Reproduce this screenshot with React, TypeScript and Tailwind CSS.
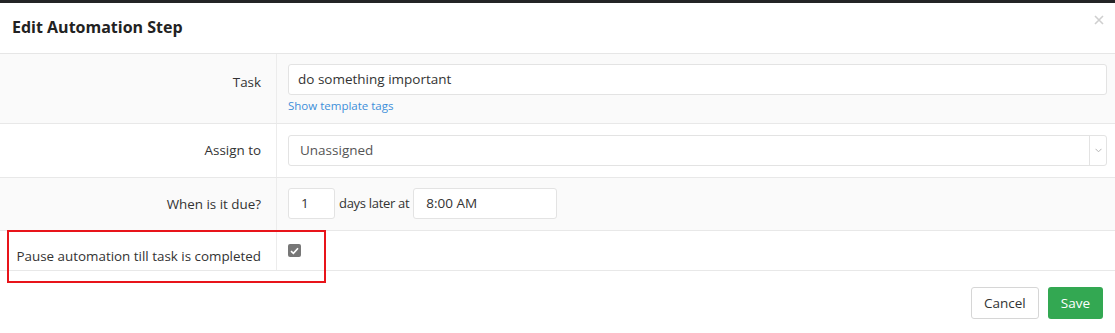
import React from 'react';

function Row({
  label,
  gray,
  children,
  labelClass = 'items-center',
  className = '',
}: {
  label: string;
  gray?: boolean;
  children: React.ReactNode;
  labelClass?: string;
  className?: string;
}) {
  return (
    <div className={`flex border-b border-[#e8e8e8] ${gray ? 'bg-[#fafafa]' : 'bg-white'} ${className}`}>
      <div className={`w-[277px] shrink-0 flex justify-end pr-[15px] border-r border-[#ececec] ${labelClass}`}>
        <span className="text-[13.4px] text-[#333]">{label}</span>
      </div>
      <div className="flex-1 pl-[11px] pr-[8px]">{children}</div>
    </div>
  );
}

export default function App() {
  return (
    <div className="w-[1115px] h-[333px] bg-white overflow-hidden font-['Open_Sans',sans-serif] text-[#333]">
      <div className="h-[3px] bg-[#232426]" />

      {/* Header */}
      <div className="h-[51px] flex items-center justify-between pl-[12px] pr-[11px] border-b border-[#e6e6e6]">
        <h1 className="text-[16px] font-bold text-[#222] -mt-[3px]">Edit Automation Step</h1>
        <svg width="10" height="10" viewBox="0 0 10 10" className="-mt-[16px]">
          <path d="M1 1 L9 9 M9 1 L1 9" stroke="#cfcfcf" strokeWidth="1.6" />
        </svg>
      </div>

      {/* Task */}
      <Row label="Task" gray labelClass="items-start pt-[18px]">
        <div className="pt-[10px] pb-[9px]">
          <div className="h-[31px] bg-white border border-[#e3e3e3] rounded-[3px] flex items-center px-[9px] text-[13.5px] text-[#333]">
            do something important
          </div>
          <div className="mt-[3px] text-[11.5px] text-[#3d8fd9] leading-[16px]">Show template tags</div>
        </div>
      </Row>

      {/* Assign to */}
      <Row label="Assign to">
        <div className="pt-[11px] pb-[11px]">
          <div className="h-[31px] bg-white border border-[#e3e3e3] rounded-[3px] flex items-center text-[13.5px] text-[#555]">
            <span className="flex-1 px-[11px]">Unassigned</span>
            <div className="w-[17px] h-full border-l border-[#e3e3e3] flex items-center justify-center">
              <svg width="7" height="5" viewBox="0 0 7 5">
                <path d="M0.5 0.8 L3.5 3.8 L6.5 0.8" fill="none" stroke="#b5b5b5" strokeWidth="1" />
              </svg>
            </div>
          </div>
        </div>
      </Row>

      {/* When is it due */}
      <Row label="When is it due?" gray>
        <div className="pt-[10px] pb-[11px] flex items-center">
          <div className="w-[47px] h-[31px] bg-white border border-[#e3e3e3] rounded-[3px] flex items-center px-[12px] text-[13.5px]">
            1
          </div>
          <span className="ml-[4px] mr-[4px] text-[13px] tracking-[-0.3px]">days later at</span>
          <div className="w-[144px] h-[31px] bg-white border border-[#e3e3e3] rounded-[3px] flex items-center px-[12px] text-[13.5px]">
            8:00 AM
          </div>
        </div>
      </Row>

      {/* Pause */}
      <div className="relative">
        <Row label="Pause automation till task is completed" labelClass="items-end pb-[4px]" className="h-[40px]">
          <div className="pt-[13px]">
            <div className="w-[13px] h-[13px] rounded-[2px] bg-[#777] flex items-center justify-center">
              <svg width="9" height="8" viewBox="0 0 9 8">
                <path d="M1 4.2 L3.4 6.4 L8 1.2" fill="none" stroke="#fff" strokeWidth="1.6" />
              </svg>
            </div>
          </div>
        </Row>
        <div className="absolute left-[7px] top-[-1px] w-[319px] h-[53px] border-2 border-[#e8141a] pointer-events-none" />
      </div>

      {/* Footer */}
      <div className="flex justify-end gap-[9px] pt-[16px] pr-[12px]">
        <button className="h-[32px] px-[12px] bg-white border border-[#d6d6d6] rounded-[3px] text-[13.5px] text-[#333]">
          Cancel
        </button>
        <button className="h-[32px] px-[13px] bg-[#33a852] rounded-[3px] text-[13.5px] text-white">
          Save
        </button>
      </div>
    </div>
  );
}
